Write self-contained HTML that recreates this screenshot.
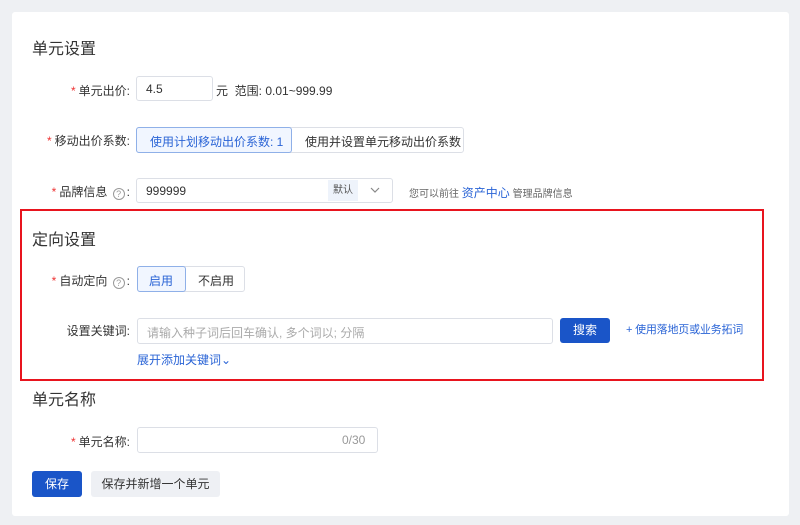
<!DOCTYPE html>
<html><head><meta charset="utf-8"><style>
*{box-sizing:border-box;margin:0;padding:0}
body{width:800px;height:525px;background:#eef0f3;font-family:"Liberation Sans","Noto Sans CJK SC",sans-serif;position:relative;overflow:hidden;color:#333;font-size:12px}
.card{position:absolute;left:12px;top:12px;width:777px;height:504px;background:#fff;border-radius:3px}
.a{position:absolute;white-space:nowrap}
.t{font-size:16px;color:#333}
.lbl{font-size:12px;color:#333;text-align:right}
.lbl b{color:#e33;font-weight:normal;margin-right:3px}
.in{position:absolute;border:1px solid #dcdfe6;border-radius:3px;background:#fff}
.blue{color:#2a64d6}
.q{display:inline-block;width:12px;height:12px;border:1px solid #999;border-radius:50%;font-size:9px;line-height:10px;text-align:center;color:#999;margin:0 2px;vertical-align:-1px}
</style></head><body>
<div class="card"></div>
<div class="a t" style="left:32px;top:35px">单元设置</div>

<div class="a lbl" style="right:670px;top:82px"><b>*</b>单元出价:</div>
<div class="in" style="left:136px;top:76px;width:77px;height:25px"></div>
<div class="a" style="left:146px;top:82px">4.5</div>
<div class="a" style="left:216px;top:82px">元&nbsp; 范围: 0.01~999.99</div>

<div class="a lbl" style="right:670px;top:132px"><b>*</b>移动出价系数:</div>
<div class="in" style="left:136px;top:127px;width:328px;height:26px"></div>
<div class="in" style="left:136px;top:127px;width:156px;height:26px;border-color:#8fb0e8;background:#f1f6ff"></div>
<div class="a blue" style="left:150px;top:133px">使用计划移动出价系数: 1</div>
<div class="a" style="left:305px;top:133px">使用并设置单元移动出价系数</div>

<div class="a lbl" style="right:670px;top:183px"><b>*</b>品牌信息 <span class="q">?</span>:</div>
<div class="in" style="left:136px;top:178px;width:257px;height:25px"></div>
<div class="a" style="left:146px;top:184px">999999</div>
<div class="a" style="left:328px;top:180px;width:30px;height:21px;background:#eef3fb;font-size:10px;line-height:21px;text-align:center;color:#555">默认</div>
<svg class="a" style="left:370px;top:186px" width="10" height="8"><path d="M1 2l4 4 4-4" stroke="#888" fill="none" stroke-width="1.2"/></svg>
<div class="a" style="left:409px;top:184px;font-size:10px;color:#666">您可以前往 <span class="blue" style="font-size:12px">资产中心</span> 管理品牌信息</div>

<div class="a" style="left:20px;top:209px;width:744px;height:172px;border:2px solid #e8141e"></div>
<div class="a t" style="left:32px;top:226px">定向设置</div>

<div class="a lbl" style="right:670px;top:272px"><b>*</b>自动定向 <span class="q">?</span>:</div>
<div class="in" style="left:137px;top:266px;width:108px;height:26px"></div>
<div class="in" style="left:137px;top:266px;width:49px;height:26px;border-color:#8fb0e8;background:#f1f6ff"></div>
<div class="a blue" style="left:149px;top:272px">启用</div>
<div class="a" style="left:198px;top:272px">不启用</div>

<div class="a lbl" style="right:670px;top:322px">设置关键词:</div>
<div class="in" style="left:137px;top:318px;width:416px;height:26px"></div>
<div class="a" style="left:147px;top:324px;color:#aaa">请输入种子词后回车确认, 多个词以; 分隔</div>
<div class="a" style="left:560px;top:318px;width:50px;height:25px;background:#1a55c8;border-radius:3px;color:#fff;text-align:center;line-height:25px">搜索</div>
<div class="a blue" style="left:626px;top:321px;font-size:11px;letter-spacing:-0.2px">+ 使用落地页或业务拓词</div>
<div class="a blue" style="left:137px;top:351px">展开添加关键词⌄</div>

<div class="a t" style="left:32px;top:386px">单元名称</div>
<div class="a lbl" style="right:670px;top:433px"><b>*</b>单元名称:</div>
<div class="in" style="left:137px;top:427px;width:241px;height:26px"></div>
<div class="a" style="left:342px;top:433px;color:#999">0/30</div>

<div class="a" style="left:32px;top:471px;width:50px;height:26px;background:#1a55c8;border-radius:3px;color:#fff;text-align:center;line-height:26px">保存</div>
<div class="a" style="left:91px;top:471px;width:129px;height:26px;background:#eef0f4;border-radius:3px;color:#333;text-align:center;line-height:26px">保存并新增一个单元</div>
</body></html>
